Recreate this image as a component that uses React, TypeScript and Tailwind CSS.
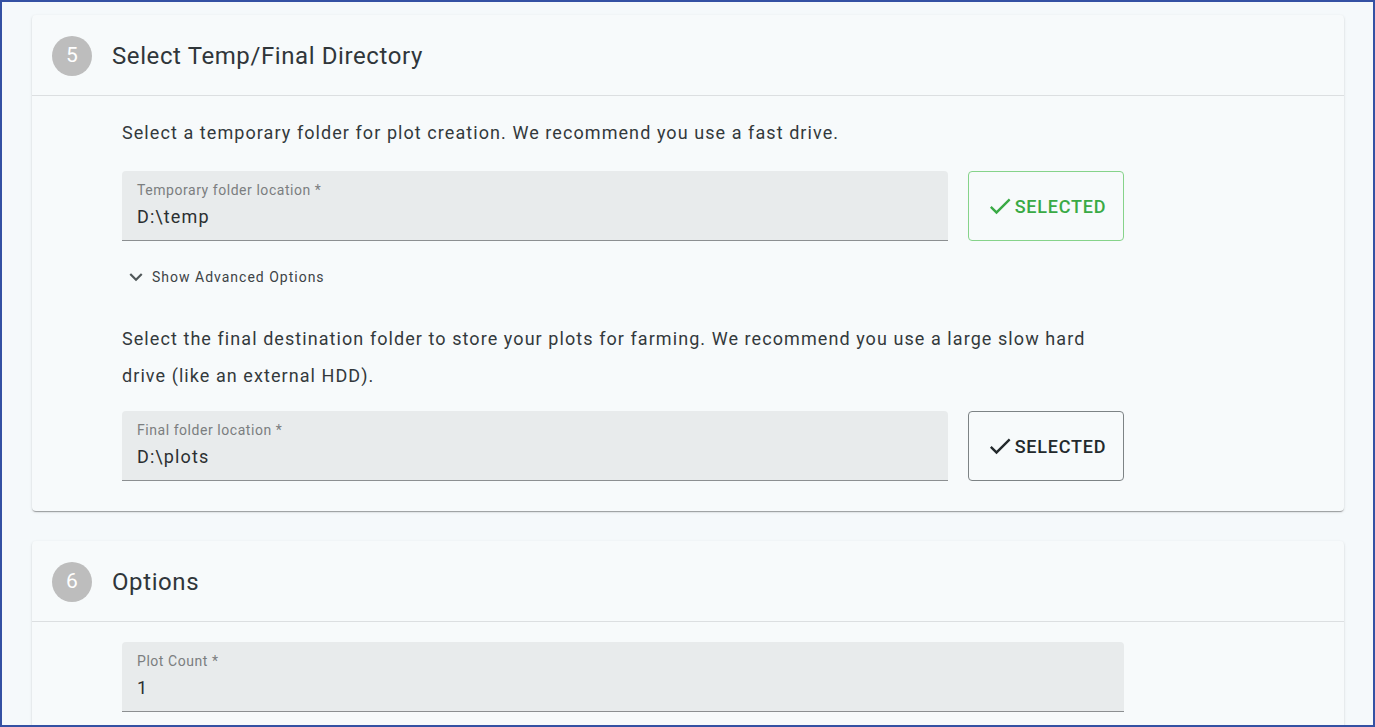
import { ReactNode } from "react";

const CheckIcon = ({ className }: { className?: string }) => (
  <svg viewBox="0 0 24 24" className={className} fill="currentColor">
    <path d="M9 16.17 4.83 12l-1.42 1.41L9 19 21 7l-1.41-1.41z" />
  </svg>
);

const ExpandMore = ({ className }: { className?: string }) => (
  <svg viewBox="0 0 24 24" className={className} fill="currentColor">
    <path d="M16.59 8.59 12 13.17 7.41 8.59 6 10l6 6 6-6z" />
  </svg>
);

function Step({ n, title, children, bodyClass }: { n: number; title: string; children: ReactNode; bodyClass: string }) {
  return (
    <section className="bg-[#f7fafb] rounded-[4px] shadow-[0_2px_1px_-1px_rgba(0,0,0,0.2),0_1px_1px_0_rgba(0,0,0,0.14),0_1px_3px_0_rgba(0,0,0,0.12)]">
      <header className="h-[81px] flex items-center pl-5 pt-[2px] gap-5 border-b border-[#dcdfe1]">
        <div className="w-10 h-10 rounded-full bg-[#bdbdbd] text-white flex items-center justify-center text-[21px]">{n}</div>
        <h2 className="text-[24px] tracking-[0.6px] text-[#30363a]">{title}</h2>
      </header>
      <div className={`pl-[90px] pr-[220px] ${bodyClass}`}>{children}</div>
    </section>
  );
}

function Field({ label, value, className = "" }: { label: string; value: string; className?: string }) {
  return (
    <div className={`h-[70px] bg-[#e8ebec] rounded-t-[4px] border-b border-[#8c8f91] px-[15px] pt-[11px] ${className}`}>
      <div className="text-[14px] leading-4 tracking-[0.55px] text-[#7b7e80]">{label}</div>
      <div className="text-[18px] leading-6 tracking-[1.1px] mt-[7px] text-[#2b2f31]">{value}</div>
    </div>
  );
}

function SelectedButton({ green }: { green?: boolean }) {
  return (
    <button
      className={`w-[156px] h-[70px] shrink-0 rounded-[4px] border flex items-center justify-center gap-[1px] text-[18px] font-medium tracking-[0.8px] ${
        green ? "border-[#86d38a] text-[#3aaa45]" : "border-[#7d8385] text-[#23292c]"
      }`}
    >
      <CheckIcon className="w-7 h-7" />
      SELECTED
    </button>
  );
}

export default function App() {
  return (
    <div className="h-screen overflow-hidden border-2 border-[#3451a3] bg-[#f5f9fb] pt-[13px] pl-[30px] pr-[29px] font-['Roboto',sans-serif] text-[#33393c]">
      <Step n={5} title="Select Temp/Final Directory" bodyClass="pt-[18px] pb-[30px]">
        <p className="text-[18px] leading-[37px] tracking-[1.07px]">Select a temporary folder for plot creation. We recommend you use a fast drive.</p>
        <div className="flex gap-5 mt-5">
          <Field label="Temporary folder location *" value="D:\temp" className="flex-1" />
          <SelectedButton green />
        </div>
        <div className="flex items-center gap-[3px] mt-[26px] h-5 pl-[1px] text-[14px] tracking-[1px] text-[#3d4346]">
          <ExpandMore className="w-[26px] h-[26px] text-[#505759]" />
          Show Advanced Options
        </div>
        <p className="text-[18px] leading-[37px] tracking-[1.07px] mt-[33px]">
          Select the final destination folder to store your plots for farming. We recommend you use a large slow hard drive (like an external HDD).
        </p>
        <div className="flex gap-5 mt-[17px]">
          <Field label="Final folder location *" value="D:\plots" className="flex-1" />
          <SelectedButton />
        </div>
      </Step>
      <div className="h-[30px]" />
      <Step n={6} title="Options" bodyClass="pt-5 pb-[30px]">
        <Field label="Plot Count *" value="1" />
      </Step>
    </div>
  );
}
